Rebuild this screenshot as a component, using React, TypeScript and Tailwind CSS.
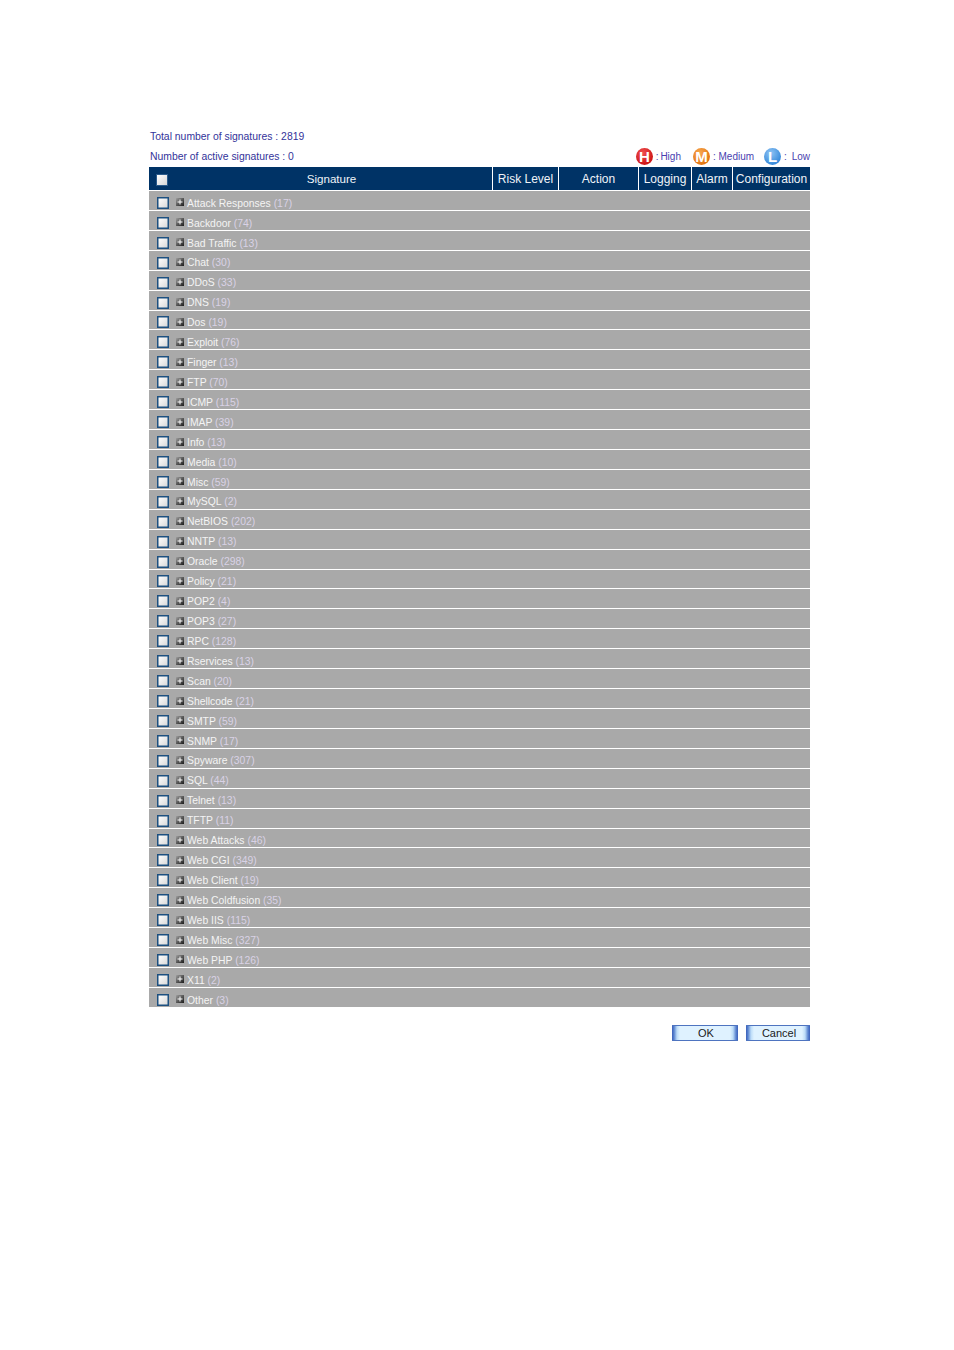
const signatures: [string, number][] = [
  ["Attack Responses", 17],
  ["Backdoor", 74],
  ["Bad Traffic", 13],
  ["Chat", 30],
  ["DDoS", 33],
  ["DNS", 19],
  ["Dos", 19],
  ["Exploit", 76],
  ["Finger", 13],
  ["FTP", 70],
  ["ICMP", 115],
  ["IMAP", 39],
  ["Info", 13],
  ["Media", 10],
  ["Misc", 59],
  ["MySQL", 2],
  ["NetBIOS", 202],
  ["NNTP", 13],
  ["Oracle", 298],
  ["Policy", 21],
  ["POP2", 4],
  ["POP3", 27],
  ["RPC", 128],
  ["Rservices", 13],
  ["Scan", 20],
  ["Shellcode", 21],
  ["SMTP", 59],
  ["SNMP", 17],
  ["Spyware", 307],
  ["SQL", 44],
  ["Telnet", 13],
  ["TFTP", 11],
  ["Web Attacks", 46],
  ["Web CGI", 349],
  ["Web Client", 19],
  ["Web Coldfusion", 35],
  ["Web IIS", 115],
  ["Web Misc", 327],
  ["Web PHP", 126],
  ["X11", 2],
  ["Other", 3],
];

function Expander() {
  return (
    <span className="flex h-2 w-2 items-center justify-center bg-gradient-to-br from-[#a0a0a0] to-[#1c1c1c]">
      <svg width="6" height="6" viewBox="0 0 6 6">
        <path d="M3 0.5v5M0.5 3h5" stroke="#ffffff" strokeWidth="1" />
      </svg>
    </span>
  );
}

function RiskBadge({ letter, className }: { letter: string; className: string }) {
  return (
    <span
      className={`flex h-[17px] w-[17px] items-center justify-center rounded-full text-[15px] leading-none font-bold text-white ${className}`}
    >
      {letter}
    </span>
  );
}

function Row({ name, count }: { name: string; count: number }) {
  return (
    <div className="flex min-h-0 flex-1 items-center border-b border-white bg-[#a9a9a9] pt-[6px] pl-2 last:border-b-0">
      <span className="-mt-[1px] h-[12px] w-[12px] border border-[#1d5080] bg-gradient-to-br from-white to-[#d8d8d8] shadow-[inset_0_0_0_0.5px_#1d5080]" />
      <span className="ml-[7px] -mt-[2px]">
        <Expander />
      </span>
      <span className="ml-[3px] text-[10.4px] whitespace-nowrap text-[#f4f4f4]">
        {name} <span className="text-[#d9d2e6]">({count})</span>
      </span>
    </div>
  );
}

function HeaderCell({ label, className }: { label: string; className: string }) {
  return (
    <div className={`flex items-center justify-center border-l border-white pt-[1px] text-[12px] whitespace-nowrap text-[#f0f4f8] ${className}`}>
      {label}
    </div>
  );
}

function ActionButton({ label, className }: { label: string; className: string }) {
  return (
    <button
      type="button"
      className={`h-4 border-y border-y-[#4e74c0] bg-[linear-gradient(90deg,#3a5fb8,#5a84d0_2px,#bcdcf8_5px,#dff2ff_8px,#dff2ff_calc(100%-8px),#bcdcf8_calc(100%-5px),#5a84d0_calc(100%-2px),#3a5fb8)] pt-[1px] pl-[2px] text-[11px] leading-none text-[#1a1a1a] ${className}`}
    >
      {label}
    </button>
  );
}

export default function App() {
  return (
    <div className="min-h-[1350px] bg-white pt-[130px] pl-[149px] font-['Liberation_Sans',Arial,sans-serif]">
      <div className="w-[661px]">
        <p className="pl-[1px] text-[10.4px] leading-[14px] text-[#33339a]">
          Total number of signatures : 2819
        </p>
        <div className="mt-[2px] flex h-[21px] items-center justify-between text-[10.4px] text-[#33339a]">
          <span className="pl-[1px] pt-[1px]">Number of active signatures : 0</span>
          <div className="flex items-center text-[10px] text-[#4a3fb0]">
            <RiskBadge letter="H" className="bg-[radial-gradient(circle_at_40%_30%,#f05050,#cc1414_75%)]" />
            <span className="ml-[3px] [word-spacing:-1px]">: High</span>
            <span className="ml-[12px]">
              <RiskBadge letter="M" className="bg-[radial-gradient(circle_at_40%_30%,#f8a850,#e2740f_75%)]" />
            </span>
            <span className="ml-[3px]">: Medium</span>
            <span className="ml-[10px]">
              <RiskBadge letter="L" className="bg-[radial-gradient(circle_at_40%_30%,#90c4f4,#3488da_75%)]" />
            </span>
            <span className="ml-[3px] [word-spacing:2px]">: Low</span>
          </div>
        </div>
        <div className="flex h-[23px] bg-[#003366]">
          <div className="relative flex w-[343px] items-center justify-center pt-[1px] pl-[22px] text-[11.6px] text-[#f0f4f8]">
            <span className="absolute top-[7px] left-[7px] h-[12px] w-[12px] border border-[#2a5a8a] bg-gradient-to-br from-white to-[#d6d6d6]" />
            Signature
          </div>
          <HeaderCell label="Risk Level" className="w-[66px]" />
          <HeaderCell label="Action" className="w-[80px]" />
          <HeaderCell label="Logging" className="w-[53px]" />
          <HeaderCell label="Alarm" className="w-[41px]" />
          <HeaderCell label="Configuration" className="w-[78px]" />
        </div>
        <div className="flex h-[817px] flex-col border-t border-white">
          {signatures.map(([name, count]) => (
            <Row key={name} name={name} count={count} />
          ))}
        </div>
        <div className="mt-[18px] flex justify-end gap-2">
          <ActionButton label="OK" className="w-[66px]" />
          <ActionButton label="Cancel" className="w-[64px]" />
        </div>
      </div>
    </div>
  );
}
